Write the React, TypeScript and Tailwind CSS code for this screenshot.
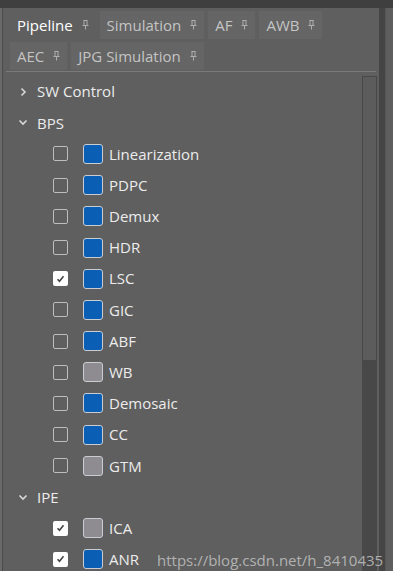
import React from 'react';

const Pin = () => (
  <svg width="7" height="10" viewBox="0 0 7 10" className="ml-[9px] opacity-70">
    <path d="M1.5 0.5h4M2 0.5v5M5 0.5v5M0.5 5.5h6M3.5 5.5v4" stroke="#cfcfcf" strokeWidth="1" fill="none" />
  </svg>
);

const Tab = ({ label, active }: { label: string; active?: boolean }) => (
  <div
    className={`flex items-center h-[28px] px-[7px] ${
      active ? 'text-white' : 'bg-[#656565] text-[#c4c4c4]'
    }`}
  >
    <span>{label}</span>
    <Pin />
  </div>
);

const Check = ({ on }: { on?: boolean }) =>
  on ? (
    <div className="w-[15px] h-[15px] rounded-[2px] bg-white flex items-center justify-center">
      <svg width="9" height="8" viewBox="0 0 9 8">
        <path d="M1.5 4.2l2 2 4-5" stroke="#444" strokeWidth="1.6" fill="none" />
      </svg>
    </div>
  ) : (
    <div className="w-[15px] h-[15px] rounded-[2px] border border-[#bdbdbd]" />
  );

const items = [
  { name: 'Linearization', blue: true },
  { name: 'PDPC', blue: true },
  { name: 'Demux', blue: true },
  { name: 'HDR', blue: true },
  { name: 'LSC', blue: true, on: true },
  { name: 'GIC', blue: true },
  { name: 'ABF', blue: true },
  { name: 'WB', blue: false },
  { name: 'Demosaic', blue: true },
  { name: 'CC', blue: true },
  { name: 'GTM', blue: false },
];

const ipe = [
  { name: 'ICA', blue: false, on: true },
  { name: 'ANR', blue: true, on: true },
];

const Leaf = ({ name, blue, on }: { name: string; blue: boolean; on?: boolean }) => (
  <div className="flex items-center h-[31.2px]">
    <div className="w-[50px]" />
    <Check on={on} />
    <div
      className={`ml-[15px] w-[20px] h-[20px] rounded-[3px] border-[1.5px] border-[#c9ccd1] ${
        blue ? 'bg-[#0a5fb4]' : 'bg-[#8e8c90]'
      }`}
    />
    <span className="ml-[6px] text-[#ececec]">{name}</span>
  </div>
);

const Group = ({ name, open }: { name: string; open?: boolean }) => (
  <div className="flex items-center h-[31.2px]">
    <div className="w-[34px] flex justify-center pl-[6px]">
      {open ? (
        <svg width="10" height="7" viewBox="0 0 10 7">
          <path d="M1.5 1.5l3.5 3.5 3.5-3.5" stroke="#d8d8d8" strokeWidth="1.6" fill="none" />
        </svg>
      ) : (
        <svg width="7" height="10" viewBox="0 0 7 10">
          <path d="M1.5 1.5l3.5 3.5-3.5 3.5" stroke="#d8d8d8" strokeWidth="1.6" fill="none" />
        </svg>
      )}
    </div>
    <span className="text-[#ececec]">{name}</span>
  </div>
);

export default function App() {
  return (
    <div
      className="w-[393px] h-[571px] overflow-hidden bg-[#3d3d3d] flex flex-col text-[15px] relative"
      style={{ fontFamily: '"Open Sans", "Noto Sans", sans-serif' }}
    >
      <div className="h-[8px] shrink-0 bg-[#3f3f3f]" />
      <div className="flex flex-1 min-h-0">
        <div className="w-[3px] bg-[#6a6a6a] border-r border-[#4c4c4c]" />
        <div className="flex-1 bg-[#5f5f5f] flex flex-col min-w-0">
          <div className="px-[3px] pt-[3px] flex flex-col gap-[3px]">
            <div className="flex gap-[4px] pl-[4px]">
              <Tab label="Pipeline" active />
              <Tab label="Simulation" />
              <Tab label="AF" />
              <Tab label="AWB" />
            </div>
            <div className="flex gap-[4px] pl-[4px]">
              <Tab label="AEC" />
              <Tab label="JPG Simulation" />
            </div>
          </div>
          <div className="mt-[1px] mx-[3px] h-px bg-[#7a7a7a]" />
          <div className="flex flex-1 min-h-0">
            <div className="flex-1 pt-[4px] overflow-hidden">
              <Group name="SW Control" />
              <Group name="BPS" open />
              {items.map((it) => (
                <Leaf key={it.name} {...it} />
              ))}
              <Group name="IPE" open />
              {ipe.map((it) => (
                <Leaf key={it.name} {...it} />
              ))}
            </div>
            <div className="w-[15px] mr-[2px] mt-[4px] bg-[#484848] flex flex-col">
              <div className="h-[285px] bg-[#5c5c5c] border border-[#474747] rounded-[1px]" />
            </div>
          </div>
        </div>
        <div className="w-[6px] bg-[#454545]" />
        <div className="w-[8px] bg-[#5e5e5e] border-l border-[#555]" />
      </div>
      <div className="absolute left-[157px] top-[553px] text-[15px] text-[#c8c8c8]/80 whitespace-nowrap leading-none">
        https://blog.csdn.net/h_8410435
      </div>
    </div>
  );
}
